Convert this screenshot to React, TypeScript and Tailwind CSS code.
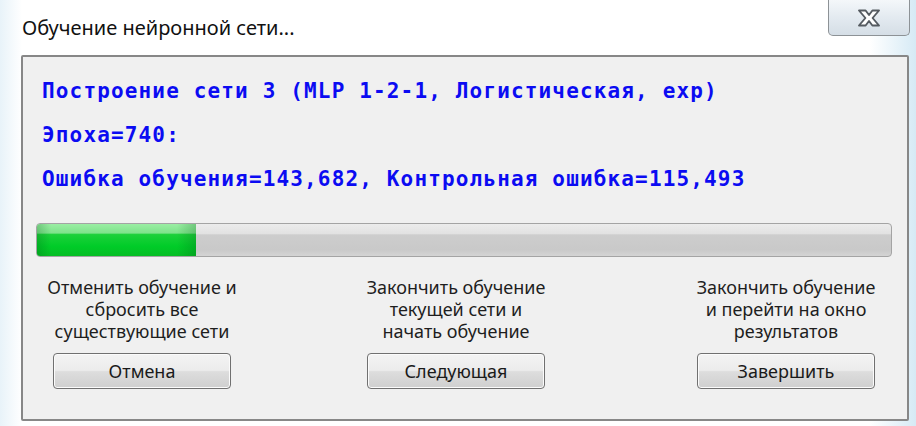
import React from "react";

const mono = { fontFamily: '"DejaVu Sans Mono", "Liberation Mono", monospace' };
const ui = { fontFamily: '"Noto Sans", "Open Sans", "Liberation Sans", sans-serif' };

function CloseGlyph() {
  return (
    <svg width="26" height="20" viewBox="0 0 26 20">
      <path
        d="M3 2.5 H9.6 L13 7 L16.4 2.5 H23 L16.6 10 L23 17.5 H16.4 L13 13 L9.6 17.5 H3 L9.4 10 Z"
        fill="#ffffff"
        stroke="#555b61"
        strokeWidth="1.9"
        strokeLinejoin="round"
      />
    </svg>
  );
}

function WinButton({ label }: { label: string }) {
  return (
    <button
      className="h-[36px] w-[178px] rounded-[4px] border-[1.5px] border-[#707070] text-[18px] text-[#1a1a1a] shadow-[inset_0_0_0_1px_#fbfbfb]"
      style={{
        ...ui,
        backgroundImage:
          "linear-gradient(to bottom, #f3f3f3 0%, #ececec 48%, #dddddd 52%, #cfcfcf 100%)",
      }}
    >
      {label}
    </button>
  );
}

function Action({ lines, label }: { lines: string[]; label: string }) {
  return (
    <div className="flex w-[200px] flex-col items-center">
      <div className="text-center text-[18px] leading-[22px] text-[#1e1e1e]" style={ui}>
        {lines.map((l) => (
          <div key={l} className="whitespace-nowrap">
            {l}
          </div>
        ))}
      </div>
      <div className="mt-[11px]">
        <WinButton label={label} />
      </div>
    </div>
  );
}

export default function App() {
  const progress = 159;
  return (
    <div
      className="flex h-[426px] w-[916px] flex-col overflow-hidden"
      style={{
        backgroundImage:
          "linear-gradient(to right, #e8f3f9 0px, #ffffff 22px, #ffffff 870px, #d6eaf5 916px)",
      }}
    >
      {/* title bar */}
      <div className="flex h-[55px] items-start justify-between">
        <div className="pl-[22px] pt-[15px] text-[20px] leading-[26px] text-[#111]" style={ui}>
          Обучение нейронной сети...
        </div>
        <div
          className="mr-[6px] flex h-[36px] w-[82px] items-center justify-center rounded-b-[5px] border-x border-b border-[#8d9296]"
          style={{
            backgroundImage: "linear-gradient(to bottom, #f4f7fa 0%, #e3eaf0 50%, #d5dee6 100%)",
          }}
        >
          <CloseGlyph />
        </div>
      </div>

      {/* client area */}
      <div className="ml-[21px] mr-[7px] h-[366px] rounded-[2px] border-2 border-[#878787] bg-[#f0f0f0]">
        <div
          className="pl-[19px] pt-[12px] text-[21px] font-bold leading-[44px] tracking-[1.15px] text-[#0b0bf2]"
          style={mono}
        >
          <div className="whitespace-nowrap">Построение сети 3 (MLP 1-2-1, Логистическая, exp)</div>
          <div>Эпоха=740:</div>
          <div className="whitespace-nowrap">Ошибка обучения=143,682, Контрольная ошибка=115,493</div>
        </div>

        {/* progress bar */}
        <div
          className="relative ml-[13px] mt-[22px] h-[34px] w-[856px] overflow-hidden rounded-[4px] border border-[#a4a4a4]"
          style={{
            backgroundImage:
              "linear-gradient(to bottom, #ececec 0%, #e2e2e2 30%, #cdcdcd 34%, #c9c9c9 80%, #d4d4d4 100%)",
          }}
        >
          <div
            className="h-full"
            style={{
              width: progress,
              backgroundImage:
                "linear-gradient(to right, rgba(0,90,20,0.25) 0px, rgba(0,90,20,0) 14px, rgba(0,90,20,0) 140px, rgba(0,90,20,0.25) 159px), linear-gradient(to bottom, #9beea4 0%, #7ee38b 28%, #1cd03a 33%, #00cc28 70%, #05bd24 100%)",
            }}
          />
        </div>

        {/* actions */}
        <div className="ml-[19px] mt-[19px] flex">
          <Action
            lines={["Отменить обучение и", "сбросить все", "существующие сети"]}
            label="Отмена"
          />
          <div className="w-[114px]" />
          <Action
            lines={["Закончить обучение", "текущей сети и", "начать обучение"]}
            label="Следующая"
          />
          <div className="w-[130px]" />
          <Action
            lines={["Закончить обучение", "и перейти на окно", "результатов"]}
            label="Завершить"
          />
        </div>
      </div>
    </div>
  );
}
